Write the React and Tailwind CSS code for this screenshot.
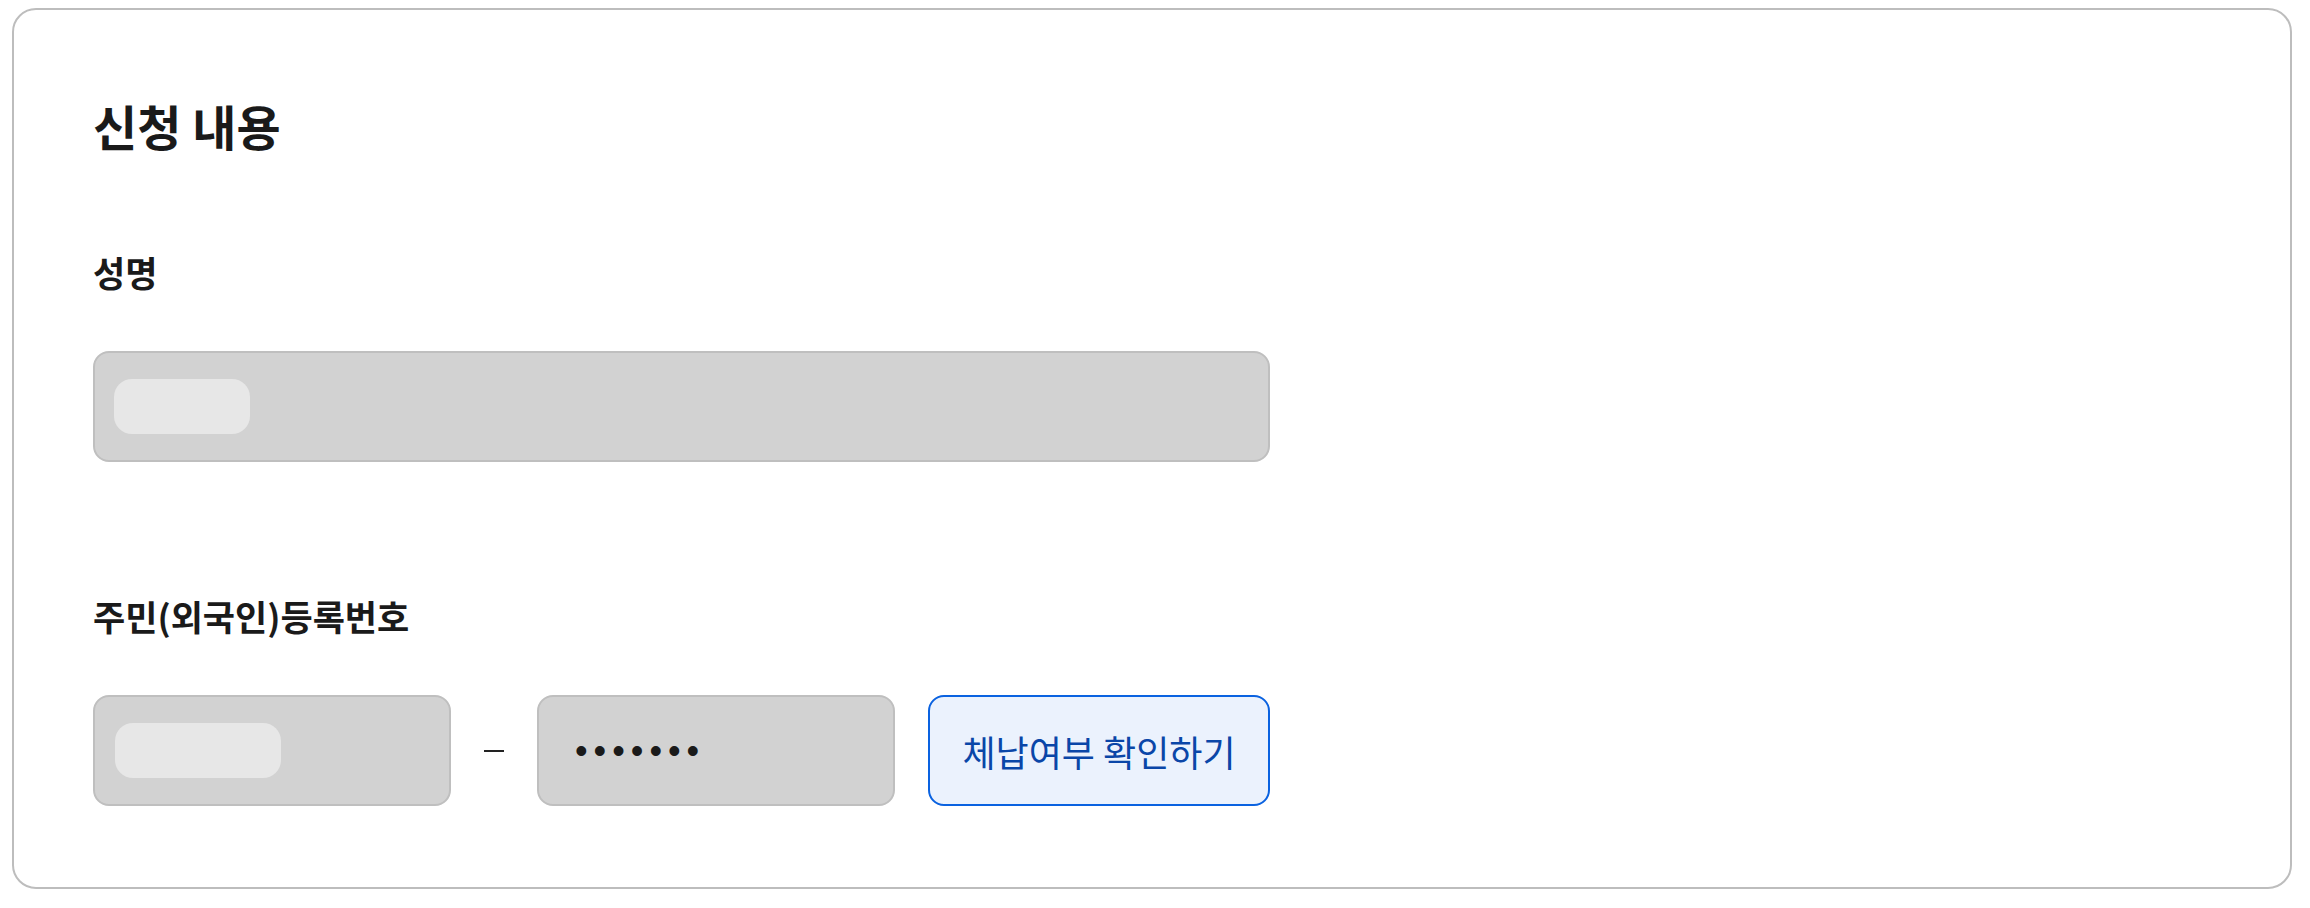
import React from 'react';

const font = { fontFamily: '"Noto Sans CJK KR", "Noto Sans", sans-serif' };

const Field = ({ className, children }) => (
    <div className={`flex items-center h-[111px] rounded-[16px] border-2 border-[#bfbfbf] bg-[#d2d2d2] ${className}`}>
        {children}
    </div>
);

const App = () => {
    return (
        <div className="min-h-screen bg-white pt-[8px] pl-[12px]" style={font}>
            <section className="w-[2280px] rounded-[24px] border-2 border-[#bdbdbd] bg-white pt-[91px] pb-[81px] pl-[79px]">
                <h1 className="text-[48px] leading-none font-bold text-[#1a1a1a]">신청 내용</h1>

                <h2 className="mt-[105px] text-[35px] leading-none font-bold text-[#1a1a1a]">성명</h2>
                <Field className="mt-[62px] w-[1177px] pl-[19px]">
                    <div className="w-[136px] h-[55px] rounded-[18px] bg-[#e7e7e7]" />
                </Field>

                <h2 className="mt-[136px] text-[35px] leading-none font-bold text-[#1a1a1a]">
                    주민(외국인)등록번호
                </h2>
                <div className="mt-[62px] flex items-center gap-[33px]">
                    <Field className="w-[358px] pl-[20px]">
                        <div className="w-[166px] h-[55px] rounded-[18px] bg-[#e7e7e7]" />
                    </Field>
                    <span className="w-[20px] h-[2px] bg-[#222]" />
                    <Field className="w-[358px] pl-[36px]">
                        <span
                            className="text-[36px] leading-none tracking-[6px] text-[#1a1a1a]"
                            style={{ fontFamily: '"Liberation Sans", sans-serif' }}
                        >
                            •••••••
                        </span>
                    </Field>
                    <button className="w-[342px] h-[111px] rounded-[16px] border-2 border-[#0a62e0] bg-[#ebf2fd] text-[36px] leading-none text-[#0a46a8]">
                        체납여부 확인하기
                    </button>
                </div>
            </section>
        </div>
    );
};

export default App;
